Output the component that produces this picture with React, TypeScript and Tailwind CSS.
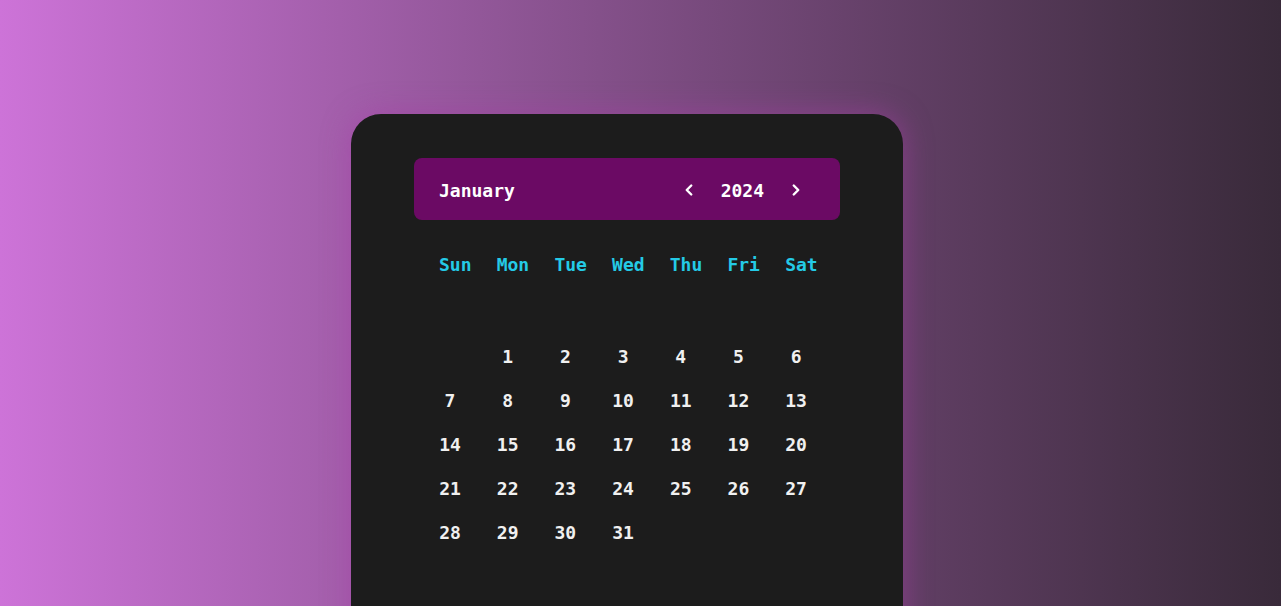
import { ChevronLeft, ChevronRight } from 'lucide-react';

const weekdays = ['Sun', 'Mon', 'Tue', 'Wed', 'Thu', 'Fri', 'Sat'];

// January 2024 starts on a Monday
const days: (number | null)[] = [null, ...Array.from({ length: 31 }, (_, i) => i + 1)];

const App = () => {
  return (
    <div className="h-screen overflow-hidden bg-gradient-to-r from-[#cd73d8] to-[#392a3a] pt-[114px] font-['DejaVu_Sans_Mono',monospace] font-bold">
      <div className="ml-[351px] w-[552px] h-[560px] rounded-[30px] bg-[#1c1c1c] px-[63px] pt-[44px] shadow-[0_0_28px_rgba(170,60,170,0.55)]">
        {/* Month / year header */}
        <div className="flex h-[62px] items-center justify-between rounded-lg bg-[#6b0a64] pl-[25px] pr-[35px] pt-[2px] text-[18px] text-white">
          <span>January</span>
          <div className="flex items-center">
            <ChevronLeft className="h-[18px] w-[18px]" strokeWidth={3.2} />
            <span className="mx-[23px]">2024</span>
            <ChevronRight className="h-[18px] w-[18px]" strokeWidth={3.2} />
          </div>
        </div>

        {/* Weekdays */}
        <div className="mt-[33px] grid grid-cols-[repeat(7,57.7px)] px-[25px] text-[18px] leading-6 text-[#24cae6]">
          {weekdays.map((d) => (
            <span key={d}>{d}</span>
          ))}
        </div>

        {/* Days */}
        <div className="mt-[58px] grid grid-cols-[repeat(7,57.7px)] auto-rows-[44px] items-center px-[25px] text-[18px] leading-6 text-[#f0f0f0]">
          {days.map((d, i) => (
            <span key={i} className="w-[22px] text-center">
              {d ?? ''}
            </span>
          ))}
        </div>
      </div>
    </div>
  );
};

export default App;
